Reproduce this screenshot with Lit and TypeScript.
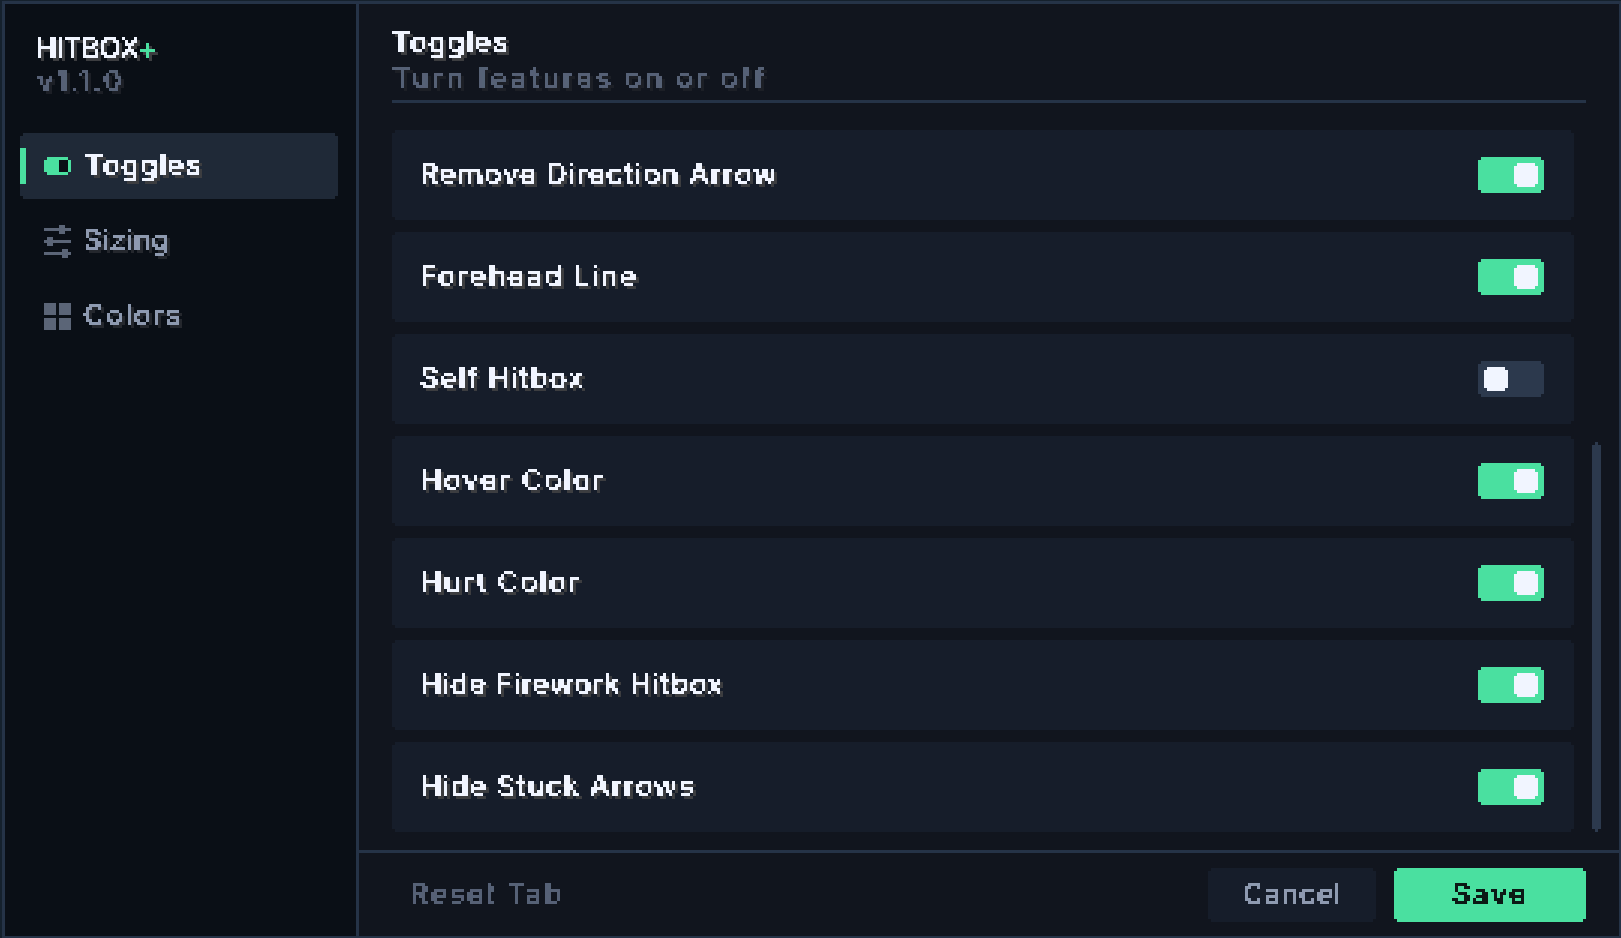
import { LitElement, html, css, svg } from "lit";
import { customElement, state } from "lit/decorators.js";

// label, enabled, tracking that fits the label to its width in the design
const ROWS: [string, boolean, number][] = [
  ["Remove Direction Arrow", true, 1],
  ["Forehead Line", true, 1.7],
  ["Self Hitbox", false, 1.2],
  ["Hover Color", true, 1.8],
  ["Hurt Color", true, 1.8],
  ["Hide Firework Hitbox", true, 0.7],
  ["Hide Stuck Arrows", true, 1],
];

@customElement("app-root")
export class AppRoot extends LitElement {
  @state() rows = ROWS;

  static styles = css`
    :host {
      display: block;
      height: 100vh;
      overflow: hidden;
      box-sizing: border-box;
      padding: 1px 0 0 2px;
      background: #15212d;
      font-family: "Inter", "Liberation Sans", sans-serif;
      font-size: 29px;
      font-weight: 500;
      line-height: 33px;
    }
    .filters { position: absolute; width: 0; height: 0; }
    .window {
      box-sizing: border-box;
      width: calc(100vw - 1px);
      height: 100vh;
      border: 3px solid #253347;
      display: flex;
      background: #11151e;
    }
    .side {
      box-sizing: border-box;
      width: 354px;
      flex: none;
      background: #0a0f16;
      border-right: 3px solid #253347;
      padding: 27px 18px 0 15px;
      display: flex;
      flex-direction: column;
    }
    .logo { padding-left: 15px; display: flex; flex-direction: column; gap: 0; margin-bottom: 36px; }
    .ver { margin-left: 2px; }
    .main { flex: 1; min-width: 0; display: flex; flex-direction: column; }
    .head { padding: 21px 33px 0 33px; }
    .head-in { border-bottom: 3px solid #253347; height: 75px; display: flex; flex-direction: column; gap: 3px; }
    .list {
      flex: 1;
      position: relative;
      padding: 27px 45px 0 33px;
      display: flex;
      flex-direction: column;
      gap: 12px;
    }
    .bar {
      position: absolute;
      right: 18px;
      top: 339px;
      width: 9px;
      height: 390px;
      background: #2c394d;
      clip-path: polygon(3px 0, 6px 0, 6px 3px, 9px 3px, 9px calc(100% - 3px), 6px calc(100% - 3px), 6px 100%, 3px 100%, 3px calc(100% - 3px), 0 calc(100% - 3px), 0 3px, 3px 3px);
    }
    .row {
      height: 90px;
      flex: none;
      padding: 0 30px 0 28px;
      box-sizing: border-box;
      background: #161d2a;
      display: flex;
      align-items: center;
      justify-content: space-between;
    }
    .row .t, .item .t, .reset .t, .btn .t { margin-bottom: 4px; }
    .notch {
      clip-path: polygon(3px 0, calc(100% - 3px) 0, calc(100% - 3px) 3px, 100% 3px, 100% calc(100% - 3px), calc(100% - 3px) calc(100% - 3px), calc(100% - 3px) 100%, 3px 100%, 3px calc(100% - 3px), 0 calc(100% - 3px), 0 3px, 3px 3px);
    }
    .tog {
      width: 66px;
      height: 36px;
      box-sizing: border-box;
      padding: 6px;
      background: #2c394d;
      display: flex;
      justify-content: flex-start;
    }
    .tog.on { background: #4ae0a0; justify-content: flex-end; }
    .knob { width: 24px; height: 24px; background: #f1f5ff; }
    .nav { display: flex; flex-direction: column; gap: 9px; }
    .item {
      position: relative;
      height: 66px;
      box-sizing: border-box;
      padding-left: 24px;
      display: flex;
      align-items: center;
      gap: 14px;
    }
    .item.active { background: #1f2937; }
    .item .tight-gap { margin-left: -2px; }
    .accent { position: absolute; left: 0; top: 15px; width: 6px; height: 36px; background: #4ae0a0; }
    .item svg { flex: none; display: block; shape-rendering: crispEdges; }
    .foot {
      border-top: 3px solid #253347;
      height: 86px;
      flex: none;
      box-sizing: border-box;
      padding: 15px 33px 0 51px;
      display: flex;
      align-items: flex-start;
    }
    .reset { height: 54px; display: flex; align-items: center; margin-right: auto; }
    .btn {
      height: 54px;
      display: flex;
      align-items: center;
      justify-content: center;
      box-sizing: border-box;
    }
    .cancel { width: 168px; background: #161d2a; margin-right: 18px; }
    .save { width: 192px; background: #4ae0a0; }

    .t { display: inline-block; white-space: nowrap; letter-spacing: 1px; filter: url(#px); }
    .s { align-self: flex-start; }
    .ls-tight { letter-spacing: -0.8px; }
    .ls-0 { letter-spacing: 0.2px; }
    .ls-05 { letter-spacing: 0.5px; }
    .ls-15 { letter-spacing: 1.5px; }
    .ls-18 { letter-spacing: 1.9px; }
    .ls-22 { letter-spacing: 2.2px; }
    .ls-28 { letter-spacing: 2.8px; }
    .s-hi { color: #f1f5ff; filter: url(#px) drop-shadow(3px 3px 0 #3c3d40); }
    .s-mu { color: #8e9ab0; filter: url(#px) drop-shadow(3px 3px 0 #24272d); }
    .s-lo { color: #566176; filter: url(#px) drop-shadow(3px 3px 0 #1c1f26); }
    .plain-mu { color: #8e9ab0; }
    .plain-lo { color: #566176; }
    .plain-dk { color: #0c1a16; }
    .plus { color: #4ae0a0; }
  `;

  private navIcon(kind: string) {
    if (kind === "toggle")
      return html`<svg width="27" height="18" viewBox="0 0 27 18">
        <path fill="#4ae0a0" d="M3 0H24V3H27V15H24V18H3V15H0V3H3Z" />
        <rect x="15" y="3" width="9" height="12" fill="#0a0f16" />
      </svg>`;
    if (kind === "sliders")
      return html`<svg width="27" height="33" viewBox="0 0 27 33" fill="#5b6577">
        <rect x="0" y="3" width="27" height="3" />
        <rect x="15" y="0" width="6" height="9" />
        <rect x="0" y="15" width="27" height="3" />
        <rect x="3" y="12" width="6" height="9" />
        <rect x="0" y="27" width="27" height="3" />
        <rect x="18" y="24" width="6" height="9" />
      </svg>`;
    return html`<svg width="27" height="27" viewBox="0 0 27 27" fill="#5b6577">
      <rect x="0" y="0" width="12" height="12" />
      <rect x="15" y="0" width="12" height="12" />
      <rect x="0" y="15" width="12" height="12" />
      <rect x="15" y="15" width="12" height="12" />
    </svg>`;
  }

  render() {
    return html`
      <svg class="filters" aria-hidden="true">
        ${svg`<filter id="px" x="-2%" y="-10%" width="104%" height="120%" color-interpolation-filters="sRGB">
          <feConvolveMatrix in="SourceGraphic" order="3" kernelMatrix="1 1 1 1 1 1 1 1 1" divisor="9" preserveAlpha="false" result="b" />
          <feFlood x="1" y="1" width="1" height="1" flood-color="#000" />
          <feComposite width="3" height="3" />
          <feTile result="grid" />
          <feComposite in="b" in2="grid" operator="in" />
          <feMorphology operator="dilate" radius="1" result="d" />
          <feComponentTransfer in="d">
            <feFuncA type="discrete" tableValues="0 0 1 1 1" />
          </feComponentTransfer>
        </filter>`}
      </svg>
      <div class="window">
        <aside class="side">
          <div class="logo">
            <span class="t s s-hi ls-tight">HITBOX<span class="plus">+</span></span>
            <span class="t s s-lo ls-22 ver">v1.1.0</span>
          </div>
          <nav class="nav">
            <div class="item active notch">
              <div class="accent"></div>
              ${this.navIcon("toggle")}
              <span class="t s-hi">Toggles</span>
            </div>
            <div class="item">
              ${this.navIcon("sliders")}
              <span class="t s-mu ls-0 tight-gap">Sizing</span>
            </div>
            <div class="item">
              ${this.navIcon("grid")}
              <span class="t s-mu ls-15 tight-gap">Colors</span>
            </div>
          </nav>
        </aside>
        <section class="main">
          <header class="head">
            <div class="head-in">
              <span class="t s s-hi">Toggles</span>
              <span class="t s s-lo ls-28">Turn features on or off</span>
            </div>
          </header>
          <div class="list">
            ${this.rows.map(
              ([label, on, track]) => html`<div class="row notch">
                <span class="t s-hi" style="letter-spacing:${track}px">${label}</span>
                <div class="tog notch ${on ? "on" : ""}"><div class="knob notch"></div></div>
              </div>`
            )}
            <div class="bar"></div>
          </div>
          <footer class="foot">
            <div class="reset"><span class="t plain-lo ls-18">Reset Tab</span></div>
            <div class="btn cancel notch"><span class="t plain-mu ls-05">Cancel</span></div>
            <div class="btn save notch"><span class="t plain-dk ls-22">Save</span></div>
          </footer>
        </section>
      </div>
    `;
  }
}
